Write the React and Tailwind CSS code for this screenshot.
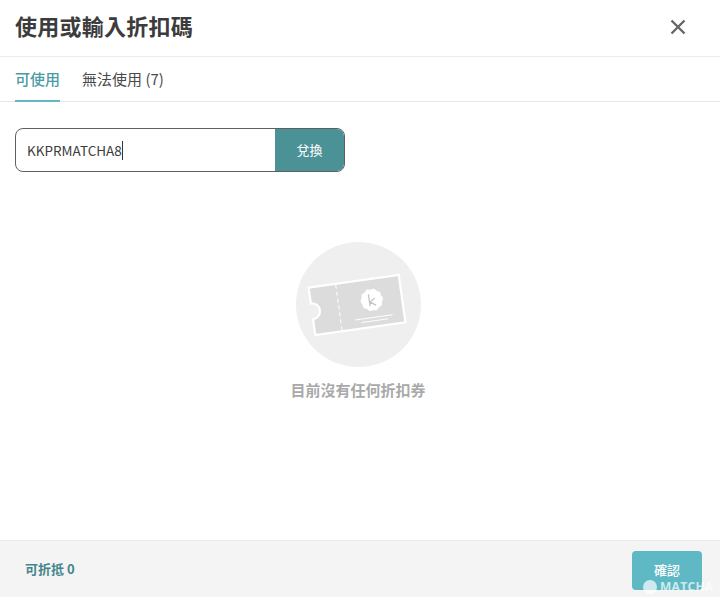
import React from 'react';

const FONT = "font-['Noto_Sans_CJK_TC','Noto_Sans',sans-serif]";

// scalloped seal outline around the "k" on the ticket
function sealPoints(cx, cy, r, bumps) {
  const pts = [];
  for (let i = 0; i < bumps * 2; i++) {
    const a = (Math.PI * i) / bumps;
    const rad = i % 2 === 0 ? r : r * 0.9;
    pts.push(`${(cx + rad * Math.cos(a)).toFixed(2)},${(cy + rad * Math.sin(a)).toFixed(2)}`);
  }
  return pts.join(' ');
}

function TicketArt() {
  return (
    <svg width="125" height="125" viewBox="0 0 125 125" className="block">
      <circle cx="62.5" cy="62.5" r="62.5" fill="#efefef" />
      <g transform="rotate(-8 61 63)">
        <path
          d="M15.5 39 H106.5 V87 H15.5 V71 A8 8 0 0 0 15.5 55 Z"
          fill="#dcdcdc"
          stroke="#ffffff"
          strokeWidth="2.2"
        />
        <line x1="42.7" y1="40" x2="42.7" y2="86" stroke="#ffffff" strokeWidth="1" strokeDasharray="4 3" />
        <polygon points={sealPoints(76.3, 60, 11.5, 10)} fill="#ffffff" />
        <path d="M73.8 54.5 V65.5 M79 59 L74.2 62 L79.4 65.5" fill="none" stroke="#c4c4c4" strokeWidth="1.3" strokeLinecap="round" strokeLinejoin="round" />
        <line x1="57" y1="77.6" x2="95" y2="77.6" stroke="#ffffff" strokeWidth="0.9" />
        <line x1="63" y1="81" x2="90" y2="81" stroke="#ffffff" strokeWidth="0.9" />
      </g>
    </svg>
  );
}

export default function App() {
  return (
    <div className={`${FONT} relative flex h-[597px] w-[720px] flex-col overflow-hidden bg-white`}>
      {/* Header */}
      <div className="flex h-[57px] shrink-0 items-center justify-between border-b border-[#ececec] pl-[15px] pr-[32px]">
        <h2 className="mb-[6px] text-[22px] font-bold leading-none tracking-[0.25px] text-[#3c3c3c]">使用或輸入折扣碼</h2>
        <svg width="20" height="20" viewBox="0 0 20 20" className="mb-[2px]">
          <path d="M3.5 3.5 L16.5 16.5 M16.5 3.5 L3.5 16.5" stroke="#666666" strokeWidth="2.4" fill="none" />
        </svg>
      </div>

      {/* Tabs */}
      <div className="flex h-[45px] shrink-0 gap-[22px] border-b border-[#e6e6e6] px-[15px]">
        <div className="relative flex items-center text-[15px] font-medium text-[#4a9ba3]">
          可使用
          <div className="absolute -bottom-px left-0 right-0 h-[2px] bg-[#62b8c4]" />
        </div>
        <div className="flex items-center text-[15px] text-[#4a4a4a]">無法使用 (7)</div>
      </div>

      {/* Coupon code input */}
      <div className="flex flex-1 flex-col px-[15px] pt-[26px]">
        <div className="flex h-[44px] w-[330px] overflow-hidden rounded-[8px] border border-[#5f5f5f]">
          <div className="flex flex-1 items-center pl-[11px] text-[13.5px] text-[#3c3c3c]">
            KKPRMATCHA8
            <span className="h-[19px] w-px bg-[#333333]" />
          </div>
          <div className="flex w-[69px] items-center justify-center bg-[#4b9296] text-[13px] text-white">
            兌換
          </div>
        </div>

        {/* Empty state */}
        <div className="mt-[70px] flex flex-col items-center pr-[4px]">
          <TicketArt />
          <p className="mt-[12px] text-[15px] font-bold leading-[22px] text-[#a9a9a9]">目前沒有任何折扣券</p>
        </div>
      </div>

      {/* Footer */}
      <div className="flex h-[57px] shrink-0 items-start justify-between border-t border-[#ebebeb] bg-[#f4f4f4] pl-[25px] pr-[18px] pt-[10px]">
        <span className="mt-[8px] text-[13px] font-bold leading-[20px] text-[#43858b]">可折抵 0</span>
        <div className="flex h-[39px] w-[70px] items-center justify-center rounded-[4px] bg-[#5fb9c5] pb-[1px] text-[13px] font-medium text-white">
          確認
        </div>
      </div>

      {/* Watermark */}
      <div className="absolute bottom-[3px] left-[643px] flex items-center gap-[3px] text-white/70">
        <span className="h-[14px] w-[14px] rounded-full bg-white/70" />
        <span className="font-['Open_Sans',sans-serif] text-[12px] font-bold leading-none tracking-[0.3px]">MATCHA</span>
      </div>
    </div>
  );
}
